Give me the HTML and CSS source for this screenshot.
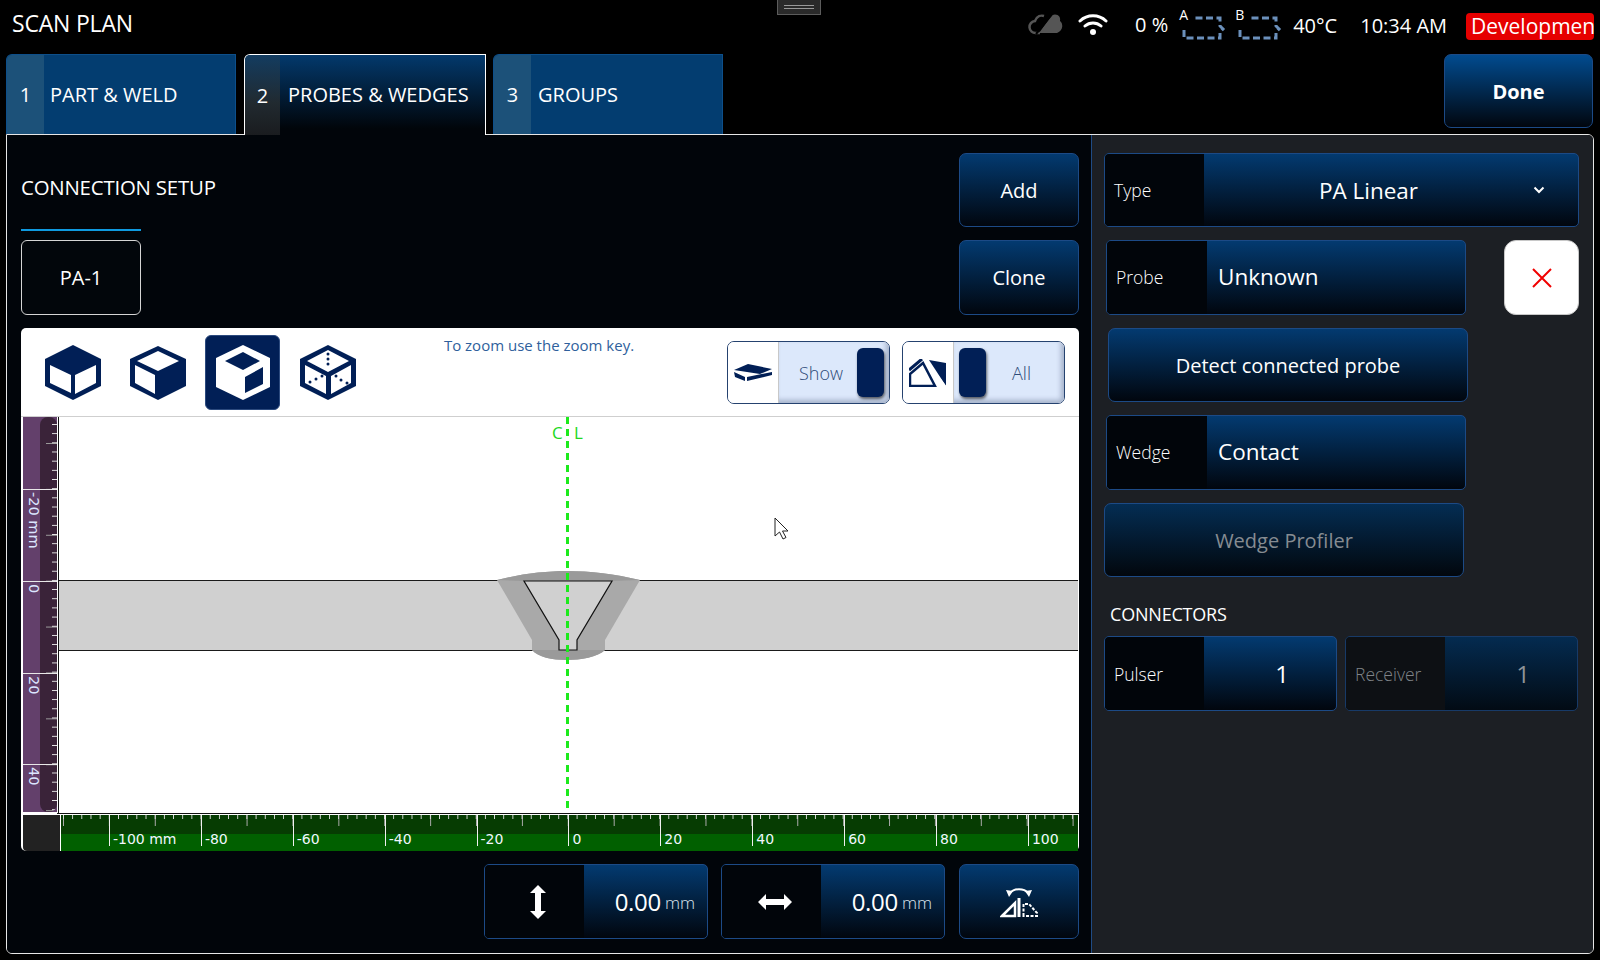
FILE: index.html
```html
<!DOCTYPE html>
<html lang="en">
<head>
<meta charset="utf-8">
<title>Scan Plan</title>
<link rel="stylesheet" href="styles.css">
</head>
<body>
<div class="app">
  <header class="topbar">
    <h1 class="title">SCAN PLAN</h1>
    <div class="handle"><span></span></div>
    <div class="status">
      <svg class="ic-cloud" width="36" height="24" viewBox="0 0 36 24"><path d="M12 21H8a6 6 0 0 1-1-12c2-5 6-6 9-5" fill="none" stroke="#555" stroke-width="2.500"/><path d="M11 21 24 3c6-2 9 2 8 6 3 2 4 9-3 12z" fill="#555"/><path d="M8 22 25 1" stroke="#000" stroke-width="2"/></svg>
      <svg class="ic-wifi" width="30" height="22" viewBox="0 0 30 22"><path d="M2 8a19 19 0 0 1 26 0M7 13a12 12 0 0 1 16 0" fill="none" stroke="#fff" stroke-width="3" stroke-linecap="round"/><circle cx="15" cy="19" r="3" fill="#fff"/></svg>
      <span class="pct">0 %</span>
      <span class="slot"><span class="slot-l">A</span><svg width="46" height="26" viewBox="0 0 46 26"><path d="M3 15v8h36v-6l3-3-3-3V3H14" fill="none" stroke="#6b90bb" stroke-width="3" stroke-dasharray="7 3.500"/></svg></span>
      <span class="slot slot-b"><span class="slot-l">B</span><svg width="46" height="26" viewBox="0 0 46 26"><path d="M3 15v8h36v-6l3-3-3-3V3H14" fill="none" stroke="#6b90bb" stroke-width="3" stroke-dasharray="7 3.500"/></svg></span>
      <span class="temp">40°C</span>
      <span class="clock">10:34 AM</span>
      <span class="badge">Developmen</span>
    </div>
  </header>

  <nav class="tabrow">
    <a class="tab"><span class="tab-n">1</span><span class="tab-t">PART &amp; WELD</span></a>
    <a class="tab tab-on"><span class="tab-n">2</span><span class="tab-t">PROBES &amp; WEDGES</span></a>
    <a class="tab"><span class="tab-n">3</span><span class="tab-t">GROUPS</span></a>
    <button class="btn btn-done">Done</button>
  </nav>

  <main class="panel">
    <section class="left">
      <div class="setup">
        <div class="setup-main">
          <h2 class="setup-title">CONNECTION SETUP</h2>
          <div class="pa">PA-1</div>
        </div>
        <div class="setup-btns">
          <button class="btn btn-side">Add</button>
          <button class="btn btn-side btn-clone">Clone</button>
        </div>
      </div>

      <div class="canvas">
        <div class="toolbar">
          <svg class="cube c1" width="56" height="56" viewBox="0 0 56 56"><path d="M28 0 56 14V41L28 55 0 41V14z" fill="#011f56"/><path d="M5 20 26 30V48L5 38zM30 30 51 20V38L30 49z" fill="#fff"/></svg>
          <svg class="cube c2" width="56" height="56" viewBox="0 0 56 56"><path d="M28 1 56 14V41L28 55 0 41V14z" fill="#011f56"/><path d="M28 6 49 16 28 26 7 16zM5 20 25 30V49L5 38z" fill="#fff"/></svg>
          <div class="cube-on">
            <svg width="54" height="56" viewBox="0 0 54 56"><path d="M27 0 54 13V42L27 55 0 42V13z" fill="#fff"/><path d="M27 7 44 16 27 25 9 16zM29 32 47 22V39L29 48z" fill="#011f56"/></svg>
          </div>
          <svg class="cube c4" width="56" height="56" viewBox="0 0 56 56"><path d="M28 0 56 14V41L28 55 0 41V14z" fill="#011f56"/><path d="M28 5 49 16 28 27 7 16zM5 20 26 31V49L5 38zM31 31 51 20V38L31 49z" fill="#fff"/><g fill="#011f56"><circle cx="28" cy="9" r="1.500"/><circle cx="28" cy="14" r="1.500"/><circle cx="28" cy="19" r="1.500"/><circle cx="10" cy="37" r="1.500"/><circle cx="16" cy="34" r="1.500"/><circle cx="22" cy="31" r="1.500"/><circle cx="36" cy="31" r="1.500"/><circle cx="41" cy="35" r="1.500"/><circle cx="47" cy="38" r="1.500"/></g></svg>
          <p class="hint">To zoom use the zoom key.</p>
          <div class="toggle tg-show">
            <span class="tg-ic"><svg width="38" height="18" viewBox="0 0 38 18"><path d="M0 6 14 0 38 5 26 10z" fill="#011f56"/><path d="M0 8 11 13V17L1 13zM13 13 38 8V11L13 17z" fill="#011f56"/></svg></span>
            <span class="tg-body"><span class="tg-label">Show</span><span class="knob"></span></span>
          </div>
          <div class="toggle tg-all">
            <span class="tg-ic"><svg width="38" height="28" viewBox="0 0 38 28"><path d="M1 27V15L14 4 26 27z" fill="none" stroke="#011f56" stroke-width="2.500"/><path d="M0 11 13 0" stroke="#011f56" stroke-width="3"/><path d="M20 1 37 4V27z" fill="#011f56"/><path d="M16 1 36 28" stroke="#fff" stroke-width="3"/></svg></span>
            <span class="tg-body tg-left"><span class="knob"></span><span class="tg-label">All</span></span>
          </div>
        </div>

        <div class="plotrow">
          <div class="vruler">
            <div class="vcell vspace"></div>
            <div class="vcell"><span>-20 mm</span></div>
            <div class="vcell"><span>0</span></div>
            <div class="vcell"><span>20</span></div>
            <div class="vcell"><span>40</span></div>
          </div>
          <svg class="plot" width="1022" height="397" viewBox="57 417 1022 397">
            <rect x="58" y="581" width="1020" height="69" fill="#d0d0d0"/>
            <path d="M58 580.500H1078M58 650.500H1078" stroke="#1a1a1a" stroke-width="1"/>
            <path d="M58.500 417V814M57 813.500H1079" stroke="#111" stroke-width="1"/>
            <path d="M497 580C520 574 545 571 567 571 590 571 615 574 640 580 L605 640V650C598 657 580 660 567 660 552 660 538 657 532 650V640Z" fill="#a9a9a9"/>
            <path d="M497 580C520 574 545 571 567 571 590 571 615 574 640 580 L612 581H524ZM532 650H605C598 657 580 660 567 660 552 660 538 657 532 650Z" fill="#9a9a9a"/>
            <path d="M524 581H612L577 640V650H559V640Z" fill="#d0d0d0" stroke="#111" stroke-width="1.200"/>
            <path d="M567.500 417V813" stroke="#1cea1c" stroke-width="3" stroke-dasharray="7 5"/>
            <text class="cl" x="552" y="439">C</text>
            <text class="cl" x="574" y="439">L</text>
            <path d="M775 518V536L779.500 532 783 539 786 537.500 782.500 531H788Z" fill="#fff" stroke="#222" stroke-width="1"/>
          </svg>
        </div>

        <div class="hrow">
          <div class="hcorner"></div>
          <div class="hruler">
            <div class="hcell hspace"></div>
            <div class="hcell"><span>-100 mm</span></div>
            <div class="hcell"><span>-80</span></div>
            <div class="hcell"><span>-60</span></div>
            <div class="hcell"><span>-40</span></div>
            <div class="hcell"><span>-20</span></div>
            <div class="hcell"><span>0</span></div>
            <div class="hcell"><span>20</span></div>
            <div class="hcell"><span>40</span></div>
            <div class="hcell"><span>60</span></div>
            <div class="hcell"><span>80</span></div>
            <div class="hcell"><span>100</span></div>
          </div>
        </div>
      </div>

      <div class="offsets">
        <div class="field f-offset">
          <span class="f-ic"><svg width="16" height="34" viewBox="0 0 16 34"><path d="M8 0 16 8H11V26H16L8 34 0 26H5V8H0Z" fill="#fff"/></svg></span>
          <span class="f-val"><b>0.00</b><i>mm</i></span>
        </div>
        <div class="field f-offset">
          <span class="f-ic"><svg width="34" height="16" viewBox="0 0 34 16"><path d="M0 8 8 0V5H26V0L34 8 26 16V11H8V16Z" fill="#fff"/></svg></span>
          <span class="f-val"><b>0.00</b><i>mm</i></span>
        </div>
        <button class="btn btn-side btn-flip">
          <svg width="38" height="32" viewBox="0 0 38 32"><path d="M10 7C14 2 24 2 28 7" fill="none" stroke="#fff" stroke-width="2"/><path d="M6 4 13 5 9 11zM32 4 25 5 29 11z" fill="#fff"/><path d="M2 30 15 17V30Z" fill="none" stroke="#fff" stroke-width="2.500"/><path d="M19 12V31" stroke="#fff" stroke-width="3"/><path d="M23.500 30V18H29L37 27V30Z" fill="none" stroke="#fff" stroke-width="2" stroke-dasharray="3 1.500"/></svg>
        </button>
      </div>
    </section>

    <aside class="right">
      <div class="field f-type">
        <span class="f-lab">Type</span>
        <span class="f-sel">PA Linear<svg class="chev" width="12" height="8" viewBox="0 0 12 8"><path d="M1.500 1.500 6 6 10.500 1.500" fill="none" stroke="#fff" stroke-width="2"/></svg></span>
      </div>
      <div class="probe-row">
        <div class="field f-wide">
          <span class="f-lab">Probe</span>
          <span class="f-text">Unknown</span>
        </div>
        <button class="btn-x"><svg width="20" height="20" viewBox="0 0 20 20"><path d="M1 1 19 19M19 1 1 19" stroke="#f00000" stroke-width="2"/></svg></button>
      </div>
      <button class="btn btn-detect">Detect connected probe</button>
      <div class="field f-wide f-wedge">
        <span class="f-lab">Wedge</span>
        <span class="f-text">Contact</span>
      </div>
      <button class="btn btn-profiler">Wedge Profiler</button>
      <h3 class="conn-title">CONNECTORS</h3>
      <div class="conn-row">
        <div class="field f-conn">
          <span class="f-lab">Pulser</span>
          <span class="f-num">1</span>
        </div>
        <div class="field f-conn f-dis">
          <span class="f-lab">Receiver</span>
          <span class="f-num">1</span>
        </div>
      </div>
    </aside>
  </main>
</div>
</body>
</html>
```

FILE: styles.css
```css
* { box-sizing: border-box; }
html, body { margin: 0; padding: 0; background: #000; }
body { font-family: "Open Sans", "Liberation Sans", sans-serif; color: #fff; }
.app { width: 1600px; height: 960px; overflow: hidden; position: relative; }

/* top bar */
.topbar { height: 54px; display: flex; align-items: flex-start; padding-left: 12px; }
.title { margin: 8px 0 0; font-size: 23px; line-height: 30px; font-weight: 400; letter-spacing: -0.2px; }
.handle { position: absolute; left: 777px; top: 0; width: 44px; height: 15px; background: #2a2a2a; border: 1px solid #5c5c5c; border-top: 0; display: flex; align-items: center; justify-content: center; }
.handle span { display: block; width: 30px; height: 4px; border-top: 1px solid #999; border-bottom: 1px solid #999; }
.status { margin-left: auto; width: 573px; height: 54px; position: relative; display: flex; align-items: flex-start; }
.ic-cloud { margin: 12px 0 0 1px; flex: none; }
.ic-wifi { margin: 13px 0 0 14px; flex: none; }
.pct { margin: 12px 0 0 27px; font-size: 20px; line-height: 26px; flex: none; }
.slot { margin: 15px 0 0 11px; flex: none; width: 56px; height: 28px; display: flex; }
.slot-b { margin-left: 0; }
.slot-l { font-size: 14px; line-height: 16px; margin-top: -8px; width: 10px; flex: none; }
.slot svg { margin-left: -8px; flex: none; }
.temp { margin: 12px 0 0 2px; font-size: 20px; line-height: 28px; flex: none; }
.clock { margin: 12px 0 0 23px; font-size: 20px; line-height: 28px; flex: none; }
.badge { margin: 13px 0 0 19px; width: 128px; height: 27px; background: #e60000; border-radius: 4px; font-size: 21px; line-height: 27px; overflow: hidden; white-space: nowrap; padding-left: 5px; flex: none; }

/* tabs */
.tabrow { height: 80px; display: flex; padding-left: 6px; position: relative; z-index: 2; align-items: flex-start; }
.tab { width: 230px; height: 80px; margin-right: 8px; background: #033d70; border: 1px solid #0d4f8a; border-bottom: 0; border-radius: 6px 0 0 0; display: flex; align-items: center; font-size: 20px; overflow: hidden; }
.tab:nth-child(2) { width: 242px; margin-right: 7px; }
.tab-n { width: 37px; height: 100%; background: #1c5179; display: flex; align-items: center; justify-content: center; flex: none; font-size: 20px; }
.tab-t { padding-left: 7px; white-space: nowrap; }
.tab:first-child .tab-t { padding-left: 6px; }
.tab-on { height: 81px; background: linear-gradient(#03396c, #01050a 92%); border: 1px solid #fff; border-bottom: 0; }
.tab-on .tab-n { background: linear-gradient(#133c60, #212a30 60%, #1a1c1f); width: 35px; }
.tab-on .tab-t { margin-top: -2px; padding-left: 8px; }
.btn { display: flex; align-items: center; justify-content: center; border: 1px solid #1c4a86; border-radius: 7px; background: linear-gradient(#033a70, #01060e); color: #fff; font-family: inherit; font-size: 20px; font-weight: 500; padding: 0; }
.btn-done { margin-left: auto; margin-right: 7px; width: 149px; height: 74px; background: linear-gradient(#014b8f, #01060e); font-weight: 700; font-size: 20px; }

/* panel */
.panel { margin: 0 6px; height: 820px; border: 1px solid #e6e6e6; border-radius: 0 6px 6px 6px; display: flex; overflow: hidden; position: relative; }
.left { width: 1084px; background: #01050a; padding: 18px 12px 0 14px; flex: none; }
.setup { display: flex; justify-content: space-between; height: 162px; }
.setup-main { width: 120px; }
.setup-title { margin: 0; height: 78px; padding-top: 20px; font-size: 20.400px; line-height: 28px; font-weight: 400; white-space: nowrap; letter-spacing: -0.2px; border-bottom: 2px solid #0f9ae0; }
.pa { margin-top: 9px; height: 75px; width: 120px; border: 1px solid #d5d5d5; border-radius: 6px; background: #02060b; display: flex; align-items: center; justify-content: center; font-size: 20px; padding-bottom: 1px; }
.setup-btns { display: flex; flex-direction: column; gap: 13px; }
.btn-side { width: 120px; height: 74px; }
.btn-clone { height: 75px; }

/* canvas */
.canvas { margin-top: 13px; height: 523px; background: #fff; border-radius: 5px; padding: 0 0 1px 2px; display: flex; flex-direction: column; }
.toolbar { height: 89px; flex: none; border-bottom: 1px solid #cfcfcf; display: flex; align-items: flex-start; margin: 0 0 0 -2px; padding-left: 24px; }
.cube { flex: none; margin-top: 17px; }
.c2 { margin-left: 29px; }
.cube-on { width: 75px; height: 75px; margin: 7px 0 0 19px; background: #011f56; border-radius: 6px; border: 1px solid #2c4a7e; display: flex; align-items: center; justify-content: center; flex: none; }
.c4 { margin-left: 20px; }
.hint { margin: 7px 0 0 73px; width: 220px; text-align: center; font-size: 15px; line-height: 20px; color: #2f5f9c; flex: none; }
.toggle { width: 163px; height: 63px; margin-top: 13px; border: 1.500px solid #25426f; border-radius: 7px; display: flex; overflow: hidden; flex: none; }
.tg-show { margin-left: 78px; }
.tg-all { margin-left: 12px; }
.tg-ic { width: 51px; display: flex; align-items: center; justify-content: center; flex: none; background: #fff; border-right: 1px solid #c8c8c8; }
.tg-body { flex: 1; background: #dce8fb; box-shadow: inset -3px -3px 5px rgba(0, 20, 60, .25); display: flex; align-items: center; padding: 0 5px 0 20px; justify-content: space-between; color: #2d4a78; font-size: 18px; font-weight: 300; }
.tg-left { padding: 0 33px 0 5px; }
.knob { width: 27px; height: 49px; background: #011f56; border-radius: 6px; box-shadow: 1px 2px 3px rgba(0, 0, 0, .6); flex: none; }
.plotrow { flex: none; height: 397px; display: flex; }
.vruler { width: 34px; height: 395px; flex: none; position: relative; overflow: hidden; background: #63406b; }
.vruler::before { content: ""; position: absolute; left: 17px; right: 0; top: 0; bottom: 0; border-radius: 8px; background-color: #3a2339; background-image: linear-gradient(#e8e8e8 1px, transparent 1px), linear-gradient(#999 1px, transparent 1px); background-size: 5px 9.180px, 11px 45.900px; background-repeat: repeat-y; background-position: right 0 top 7px, right 0 top 26px; }
.vcell { position: relative; height: 91.750px; border-top: 1px solid #e8e8e8; }
.vcell span { display: block; writing-mode: vertical-rl; position: absolute; left: 3px; top: 2px; font-family: "DejaVu Sans", sans-serif; font-size: 14.500px; line-height: 16px; color: #dce6ff; white-space: nowrap; }
.vspace { height: 72px; border-top: 0; }
.plot { display: block; flex: none; }
.cl { font-family: "Open Sans", sans-serif; font-size: 17px; fill: #22d822; }
.hrow { flex: none; height: 36px; margin-top: 1px; display: flex; }
.hcorner { width: 37px; flex: none; background: #222; border-radius: 0 0 0 4px; }
.hruler { flex: none; width: 1017px; margin-left: 1px; background: linear-gradient(#063c02 0, #063c02 19px, #016000 19px); display: flex; position: relative; overflow: hidden; }
.hruler::before { content: ""; position: absolute; left: 0; right: 0; top: 0; height: 11px; background-image: linear-gradient(to right, #ddd 1px, transparent 1px), linear-gradient(to right, #aaa 1px, transparent 1px); background-size: 9.180px 4px, 45.900px 11px; background-repeat: repeat-x; background-position: 2px 0, 2px 0; }
.hcell { width: 91.900px; flex: none; height: 31px; border-left: 1px solid #f0f0f0; position: relative; }
.hcell span { position: absolute; left: 3px; top: 16px; font-family: "DejaVu Sans", sans-serif; font-size: 14px; line-height: 16px; color: #f2f6ff; white-space: nowrap; }
.hspace { width: 48px; border-left: 0; }

/* offset row */
.offsets { margin-top: 13px; display: flex; justify-content: flex-end; gap: 13px; height: 75px; }
.field { display: flex; border: 1px solid #1c4a86; border-radius: 5px; background: linear-gradient(#033a70, #01060e); overflow: hidden; flex: none; }
.f-offset { width: 224px; height: 75px; }
.f-ic { width: 99px; background: #01050a; display: flex; align-items: center; justify-content: center; flex: none; padding-left: 6px; }
.f-val { flex: 1; display: flex; align-items: center; justify-content: flex-end; padding-right: 12px; }
.f-val b { font-weight: 400; font-size: 24px; letter-spacing: -0.3px; }
.f-val i { font-style: normal; font-size: 17px; margin-left: 4px; color: #dfe6ee; font-weight: 300; padding-top: 2px; }
.btn-flip { width: 120px; height: 75px; margin-left: 1px; }

/* right */
.right { flex: 1; background: #1c1f24; border-left: 1px solid #1f4b85; padding-top: 18px; min-width: 0; }
.f-lab { width: 99px; background: #01050a; flex: none; display: flex; align-items: center; padding-left: 9px; font-size: 17.500px; font-weight: 300; color: #fff; }
.f-type { margin-left: 12px; width: 475px; height: 74px; }
.f-sel { flex: 1; display: flex; align-items: center; justify-content: center; font-size: 22.500px; position: relative; padding-right: 45px; }
.chev { position: absolute; right: 33px; top: 32px; }
.probe-row { margin: 13px 0 0 14px; display: flex; height: 75px; }
.f-wide { width: 360px; height: 75px; }
.f-wide .f-lab { width: 100px; padding-bottom: 2px; }
.f-text { padding: 0 0 2px 11px; font-size: 22.500px; display: flex; align-items: center; }
.btn-x { width: 75px; height: 75px; margin-left: 38px; background: #fff; border: 1.500px solid #c8c8c8; border-radius: 12px; display: flex; align-items: center; justify-content: center; padding: 0; }
.btn-detect { margin: 13px 0 0 16px; width: 360px; height: 74px; }
.f-wedge { margin: 13px 0 0 14px; }
.btn-profiler { margin: 13px 0 0 12px; width: 360px; height: 74px; color: #868c92; background: linear-gradient(#042d53, #02070d); }
.conn-title { margin: 23px 0 0 18px; font-size: 18px; line-height: 28px; font-weight: 400; letter-spacing: -0.2px; }
.conn-row { margin: 8px 0 0 12px; display: flex; gap: 8px; }
.f-conn { width: 233px; height: 75px; }
.f-num { flex: 1; display: flex; align-items: center; justify-content: center; font-size: 24px; padding-left: 24px; }
.f-dis { background: linear-gradient(#042b50, #020b14); border-color: #173a68; }
.f-dis .f-lab { background: #0d1014; color: #7f8388; }
.f-dis .f-num { color: #8f9499; }
```
